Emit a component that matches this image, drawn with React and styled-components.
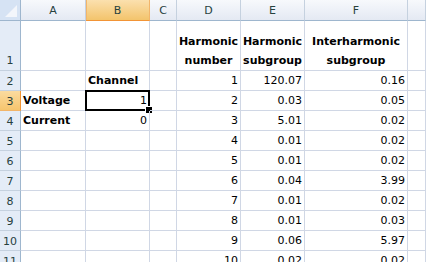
import React from 'react';
import styled, { createGlobalStyle, css } from 'styled-components';

const GlobalStyle = createGlobalStyle`
  html, body {
    margin: 0;
    padding: 0;
    background: #ffffff;
    overflow: hidden;
  }
  * {
    box-sizing: border-box;
  }
`;

// column widths include the 1px gridline on the right
const Sheet = styled.div`
  display: grid;
  grid-template-columns: 21px 65px 64px 27px 64px 64px 103px 1fr;
  grid-template-rows: 21px 50px repeat(10, 20px);
  width: 426px;
  height: 262px;
  overflow: hidden;
  font-family: "DejaVu Sans", Verdana, sans-serif;
  font-size: 11px;
  color: #000;
`;

const Corner = styled.div`
  position: relative;
  background: #d6e3f4;
  border-right: 1px solid #9eb6ce;
  border-bottom: 1px solid #9eb6ce;
  &::after {
    content: '';
    position: absolute;
    right: 3px;
    bottom: 3px;
    width: 0;
    height: 0;
    border-left: 12px solid transparent;
    border-bottom: 12px solid #f3f6fb;
  }
`;

const ColHeader = styled.div`
  display: flex;
  align-items: center;
  justify-content: center;
  padding-top: 1px;
  color: #27413e;
  background: linear-gradient(#f7f9fc, #e4e9f3);
  border-right: 1px solid #c5d1df;
  border-bottom: 1px solid #9eb6ce;
  ${p => p.$selected && css`
    background: linear-gradient(#fbe0ae, #f3c46c);
    border-right: 1px solid #f2b56a;
    border-bottom: 1px solid #f29436;
    box-shadow: inset 1px 0 0 #f2b56a;
  `}
`;

const RowHeader = styled.div`
  display: flex;
  align-items: center;
  justify-content: center;
  padding-top: ${p => (p.$tall ? '30px' : '2px')};
  color: #27413e;
  background: #e4ecf7;
  border-right: 1px solid #9eb6ce;
  border-bottom: 1px solid #c5d1df;
  ${p => p.$selected && css`
    background: linear-gradient(#fbdb9f, #f6c56e);
    border-right: 1px solid #f29436;
    border-bottom: 1px solid #f2b56a;
  `}
`;

const Cell = styled.div`
  position: relative;
  display: flex;
  align-items: flex-end;
  justify-content: ${p => (p.$align === 'right' ? 'flex-end' : p.$align === 'center' ? 'center' : 'flex-start')};
  text-align: ${p => p.$align || 'left'};
  padding: 0 2px 0 2px;
  line-height: 19px;
  font-weight: ${p => (p.$bold ? 'bold' : 'normal')};
  white-space: nowrap;
  border-right: 1px solid #d0d7e5;
  border-bottom: 1px solid #d0d7e5;
  ${p => p.$active && css`
    &::before {
      content: '';
      position: absolute;
      left: -1px;
      top: -1px;
      right: -1px;
      bottom: -1px;
      border: 2px solid #000;
      pointer-events: none;
    }
    &::after {
      content: '';
      position: absolute;
      right: -4px;
      bottom: -4px;
      width: 6px;
      height: 6px;
      background: #000;
      border: 1px solid #fff;
    }
  `}
`;

const columns = ['A', 'B', 'C', 'D', 'E', 'F', ''];

const data = [
  [1, '120.07', '0.16'],
  [2, '0.03', '0.05'],
  [3, '5.01', '0.02'],
  [4, '0.01', '0.02'],
  [5, '0.01', '0.02'],
  [6, '0.04', '3.99'],
  [7, '0.01', '0.02'],
  [8, '0.01', '0.03'],
  [9, '0.06', '5.97'],
  [10, '0.02', '0.02'],
];

const leftCells = {
  2: ['', 'Channel'],
  3: ['Voltage', '1'],
  4: ['Current', '0'],
};

const App = () => (
  <>
    <GlobalStyle />
    <Sheet>
      <Corner />
      {columns.map((c, i) => (
        <ColHeader key={i} $selected={c === 'B'}>{c}</ColHeader>
      ))}

      <RowHeader $tall>1</RowHeader>
      <Cell />
      <Cell />
      <Cell />
      <Cell $bold $align="center">Harmonic<br />number</Cell>
      <Cell $bold $align="center">Harmonic<br />subgroup</Cell>
      <Cell $bold $align="center">Interharmonic<br />subgroup</Cell>
      <Cell />

      {data.map((d, i) => {
        const row = i + 2;
        const left = leftCells[row] || ['', ''];
        return (
          <React.Fragment key={row}>
            <RowHeader $selected={row === 3}>{row}</RowHeader>
            <Cell $bold>{left[0]}</Cell>
            {row === 2 ? (
              <Cell $bold>{left[1]}</Cell>
            ) : (
              <Cell $align="right" $active={row === 3}>{left[1]}</Cell>
            )}
            <Cell />
            <Cell $align="right">{d[0]}</Cell>
            <Cell $align="right">{d[1]}</Cell>
            <Cell $align="right">{d[2]}</Cell>
            <Cell />
          </React.Fragment>
        );
      })}
    </Sheet>
  </>
);

export default App;
